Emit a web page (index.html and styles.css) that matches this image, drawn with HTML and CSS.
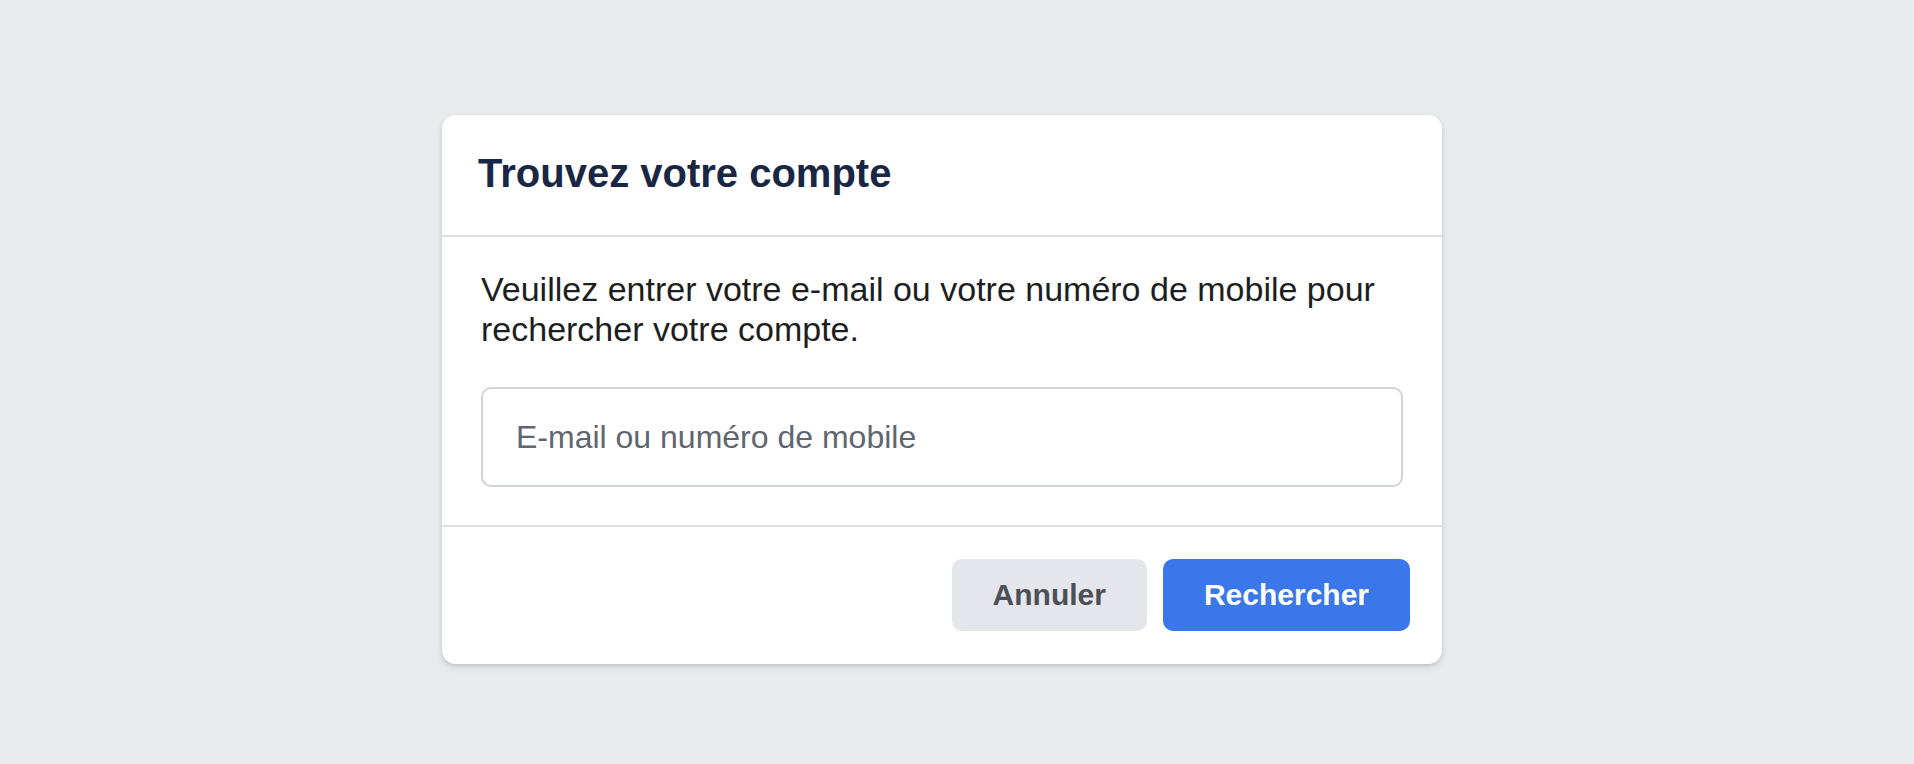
FILE: index.html
```html
<!DOCTYPE html>
<html lang="fr">
<head>
<meta charset="utf-8">
<title>Trouvez votre compte</title>
<link rel="stylesheet" href="styles.css">
</head>
<body>
<div class="page">
  <div class="card">
    <div class="card-header">
      <h2 class="title">Trouvez votre compte</h2>
    </div>
    <div class="card-body">
      <p class="intro">Veuillez entrer votre e-mail ou votre numéro de mobile pour rechercher votre compte.</p>
      <input class="field" type="text" placeholder="E-mail ou numéro de mobile">
    </div>
    <div class="card-footer">
      <button class="btn btn-cancel" type="button">Annuler</button>
      <button class="btn btn-primary" type="button">Rechercher</button>
    </div>
  </div>
</div>
</body>
</html>
```

FILE: styles.css
```css
* {
  box-sizing: border-box;
}

html, body {
  margin: 0;
  padding: 0;
  background: #e9eaed;
  font-family: "Liberation Sans", Arial, Helvetica, sans-serif;
}

.page {
  padding: 115px 0 0 442px;
  min-height: 764px;
}

.card {
  width: 1000px;
  background: #ffffff;
  border-radius: 14px;
  box-shadow: 0 2px 4px rgba(0, 0, 0, 0.12), 0 4px 10px rgba(0, 0, 0, 0.06);
}

.card-header {
  padding: 34px 39px 38px 36px;
  border-bottom: 2px solid #dddee1;
}

.title {
  margin: 0;
  font-size: 40px;
  line-height: 48px;
  font-weight: 700;
  color: #1a2744;
}

.card-body {
  padding: 32px 39px 38px 39px;
  border-bottom: 2px solid #dddee1;
}

.intro {
  margin: 0 0 38px 0;
  font-size: 34px;
  line-height: 40px;
  color: #1c1e21;
}

.field {
  display: block;
  width: 100%;
  height: 100px;
  border: 2px solid #d0d3d8;
  border-radius: 10px;
  padding: 0 33px;
  font-family: inherit;
  font-size: 32px;
  color: #1c1e21;
  background: #ffffff;
  outline: none;
}

.field::placeholder {
  color: #5f6671;
  opacity: 1;
}

.card-footer {
  display: flex;
  justify-content: flex-end;
  gap: 16px;
  padding: 32px 32px 33px 32px;
}

.btn {
  height: 72px;
  padding: 0 41px;
  border: none;
  border-radius: 10px;
  font-family: inherit;
  font-size: 30px;
  font-weight: 700;
  cursor: pointer;
}

.btn-cancel {
  background: #e4e6eb;
  color: #4b4f56;
}

.btn-primary {
  background: #3a77e9;
  color: #ffffff;
}
```
